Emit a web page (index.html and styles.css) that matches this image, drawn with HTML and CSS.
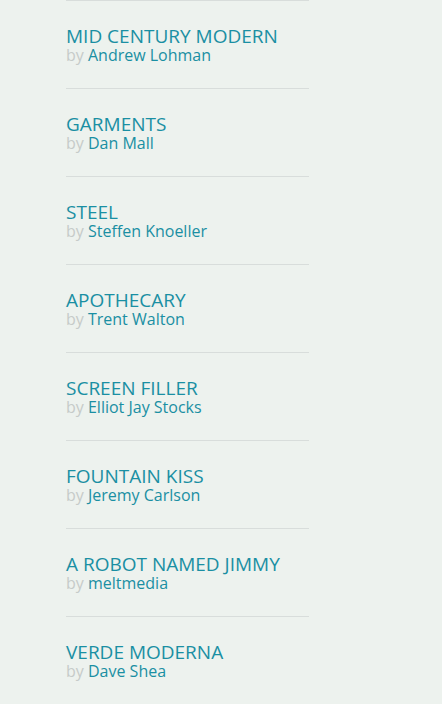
FILE: index.html
```html
<!DOCTYPE html>
<html>
<head>
<meta charset="utf-8">
<link rel="stylesheet" href="styles.css">
</head>
<body>
<ul class="designs">
  <li class="design"><a class="title" href="#">Mid Century Modern</a><div class="byline">by <a href="#">Andrew Lohman</a></div></li>
  <li class="design"><a class="title" href="#">Garments</a><div class="byline">by <a href="#">Dan Mall</a></div></li>
  <li class="design"><a class="title" href="#">Steel</a><div class="byline">by <a href="#">Steffen Knoeller</a></div></li>
  <li class="design"><a class="title" href="#">Apothecary</a><div class="byline">by <a href="#">Trent Walton</a></div></li>
  <li class="design"><a class="title" href="#">Screen Filler</a><div class="byline">by <a href="#">Elliot Jay Stocks</a></div></li>
  <li class="design"><a class="title" href="#">Fountain Kiss</a><div class="byline">by <a href="#">Jeremy Carlson</a></div></li>
  <li class="design"><a class="title" href="#">A Robot Named Jimmy</a><div class="byline">by <a href="#">meltmedia</a></div></li>
  <li class="design"><a class="title" href="#">Verde Moderna</a><div class="byline">by <a href="#">Dave Shea</a></div></li>
</ul>
</body>
</html>
```

FILE: styles.css
```css
html, body {
  margin: 0;
  padding: 0;
  background: #edf2ee;
  font-family: "Open Sans", "DejaVu Sans", sans-serif;
}
.designs {
  list-style: none;
  margin: 0 0 0 66px;
  padding: 0;
  width: 243px;
}
.design {
  border-top: 1px solid #d8dddb;
  padding: 26px 0 24px;
}
.title {
  display: block;
  font-size: 19px;
  line-height: 19px;
  text-transform: uppercase;
  color: #1a8fa3;
  text-decoration: none;
}
.byline {
  font-size: 16px;
  line-height: 18px;
  color: #c6cbc9;
}
.byline a {
  color: #1a8fa3;
  text-decoration: none;
}
```
